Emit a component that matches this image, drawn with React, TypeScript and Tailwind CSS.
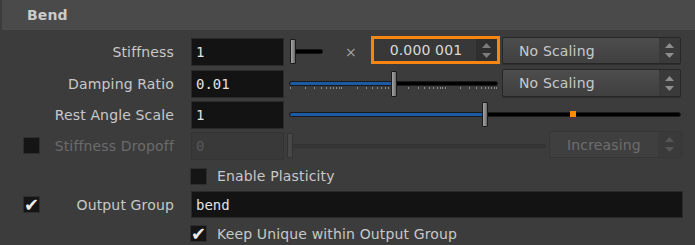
import React from "react";

const decades = [0, 1, 2, 3];
const tickXs: number[] = [];
decades.forEach((d) => {
  for (let n = 1; n <= 9; n++) tickXs.push(0.5 + (d + Math.log10(n)) * 51.7);
});
tickXs.push(0.5 + 4 * 51.7);

function Arrows({ color = "#8e8e8e" }: { color?: string }) {
  return (
    <svg width="9" height="15" viewBox="0 0 9 15">
      <polygon points="4.5,0 9,5 0,5" fill={color} />
      <polygon points="0,10 9,10 4.5,15" fill={color} />
    </svg>
  );
}

function Handle({ className }: { className: string }) {
  return (
    <div
      className={`absolute w-[6px] rounded-[1px] border border-[#1c1c1c] bg-gradient-to-r from-[#a4a4a4] via-[#8a8a8a] to-[#6a6a6a] ${className}`}
    />
  );
}

function Dropdown({ label, className }: { label: string; className: string }) {
  return (
    <div
      className={`flex self-start rounded-[2px] border border-[#262626] bg-gradient-to-b from-[#4d4d4d] to-[#404040] shadow-[0_1px_0_#2e2e2e] ${className}`}
    >
      <div className="flex-1 flex items-center pl-[16px] text-[#c9c9c9]">{label}</div>
      <div className="w-[21px] flex items-center justify-center bg-[#3a3a3a]">
        <Arrows />
      </div>
    </div>
  );
}

function Check({ checked }: { checked?: boolean }) {
  return (
    <div className="w-[17px] h-[17px] bg-[#151515] border border-[#2e2e2e] flex items-center justify-center text-[#ececec] text-[18px] leading-none">
      {checked ? "✔" : ""}
    </div>
  );
}

function Label({ text, dim }: { text: string; dim?: boolean }) {
  return (
    <div className={`w-[151px] pr-[17px] text-right ${dim ? "text-[#6b6b6b]" : "text-[#c8c8c8]"}`}>
      {text}
    </div>
  );
}

function Field({ value, className = "h-[28px]", dim }: { value: string; className?: string; dim?: boolean }) {
  return (
    <div
      className={`w-[93px] flex items-center pl-[4px] tracking-normal font-['DejaVu_Sans_Mono',monospace] border ${
        dim ? "bg-[#393939] border-[#343434] text-[#575757]" : "bg-[#131313] border-[#2a2a2a] text-[#e2e2e2]"
      } ${className}`}
    >
      {value}
    </div>
  );
}

export default function App() {
  return (
    <div className="w-[695px] h-[245px] bg-[#3c3c3c] overflow-hidden font-['DejaVu_Sans',sans-serif] text-[14px] tracking-[0.15px] leading-none">
      {/* Header */}
      <div className="ml-[2px] h-[30px] bg-[#4a4a4a] flex items-center pl-[25px] font-bold text-[#cbcbcb]">
        Bend
      </div>
      <div className="h-[6px]" />

      {/* Stiffness */}
      <div className="h-[32px] flex items-center">
        <div className="w-[40px]" />
        <Label text="Stiffness" />
        <Field value="1" />
        <div className="relative ml-[6px] w-[33px] h-[26px]">
          <Handle className="left-0 top-0 h-[25px]" />
          <div className="absolute left-[5px] right-0 top-[10px] h-[5px] bg-black border border-[#151515] rounded-r-full" />
        </div>
        <span className="ml-[22px] w-[8px] text-center text-[#a2a2a2]">×</span>
        <div className="self-start ml-[18px] w-[129px] h-[28px] border-[3px] border-[#f7850f] bg-[#383838] flex">
          <div className="flex-1 flex items-center justify-center text-[#dadada] font-medium pl-[2px]">0.000 001</div>
          <div className="w-[21px] bg-[#2f2f2f] flex items-center justify-center">
            <Arrows color="#7c7c7c" />
          </div>
        </div>
        <Dropdown label="No Scaling" className="mt-[1px] ml-[2px] w-[179px] h-[27px]" />
      </div>

      {/* Damping Ratio */}
      <div className="h-[32px] flex items-center">
        <div className="w-[40px]" />
        <Label text="Damping Ratio" />
        <Field value="0.01" />
        <div className="relative ml-[5px] w-[209px] h-[28px]">
          <div className="absolute left-0 right-0 top-[11px] h-[5px] bg-black border border-[#1a1a1a] rounded-full overflow-hidden">
            <div className="w-[102px] h-full bg-[#1d5aa4]" />
          </div>
          <svg className="absolute left-0 top-[17px]" width="209" height="3">
            {tickXs.map((x, i) => (
              <rect key={i} x={Math.round(x)} y="0" width="1" height="2" fill="#8c8c8c" />
            ))}
          </svg>
          <Handle className="left-[102px] top-[1px] h-[26px]" />
        </div>
        <Dropdown label="No Scaling" className="mt-[1px] ml-[4px] w-[179px] h-[28px]" />
      </div>

      {/* Rest Angle Scale */}
      <div className="h-[30px] flex items-center">
        <div className="w-[40px]" />
        <Label text="Rest Angle Scale" />
        <Field value="1" />
        <div className="relative ml-[5px] w-[392px] h-[28px]">
          <div className="absolute left-0 right-0 top-[11px] h-[5px] bg-black border border-[#1a1a1a] rounded-full overflow-hidden">
            <div className="w-[193px] h-full bg-[#1d5aa4]" />
          </div>
          <div className="absolute left-[281px] top-[10px] w-[6px] h-[6px] bg-[#ff8a00]" />
          <Handle className="left-[193px] top-[1px] h-[25px]" />
        </div>
      </div>

      {/* Stiffness Dropoff (disabled) */}
      <div className="h-[31px] flex items-center">
        <div className="w-[40px] pl-[23px]">
          <Check />
        </div>
        <Label text="Stiffness Dropoff" dim />
        <Field value="0" dim />
        <div className="relative ml-[3px] w-[259px] h-[28px]">
          <div className="absolute left-[3px] right-0 top-[12px] h-[4px] bg-[#363636] border border-[#323232] rounded-full" />
          <div className="absolute left-0 top-[1px] w-[6px] h-[25px] rounded-[1px] border border-[#333] bg-[#474747]" />
        </div>
        <div className="self-start mt-[1px] ml-[3px] w-[133px] h-[27px] flex rounded-[2px] border border-[#363636] bg-[#3f3f3f]">
          <div className="flex-1 flex items-center pl-[17px] text-[#6e6e6e]">Increasing</div>
          <div className="w-[23px] flex items-center justify-center bg-[#3a3a3a]">
            <Arrows color="#555555" />
          </div>
        </div>
      </div>

      {/* Enable Plasticity */}
      <div className="h-[30px] flex items-center">
        <div className="w-[190px]" />
        <Check />
        <span className="ml-[10px] text-[#c8c8c8]">Enable Plasticity</span>
      </div>

      {/* Output Group */}
      <div className="h-[27px] flex items-center">
        <div className="w-[40px] pl-[23px]">
          <Check checked />
        </div>
        <Label text="Output Group" />
        <div className="w-[492px] h-[27px] flex items-center pl-[4px] tracking-normal bg-[#131313] border border-[#2a2a2a] text-[#e2e2e2] font-['DejaVu_Sans_Mono',monospace]">
          bend
        </div>
      </div>

      {/* Keep Unique */}
      <div className="h-[27px] flex items-center pt-[4px]">
        <div className="w-[190px]" />
        <Check checked />
        <span className="ml-[10px] text-[#c8c8c8]">Keep Unique within Output Group</span>
      </div>
    </div>
  );
}
